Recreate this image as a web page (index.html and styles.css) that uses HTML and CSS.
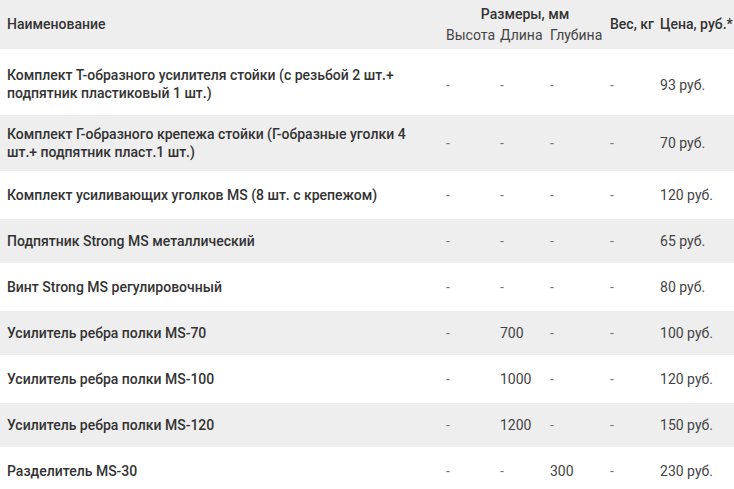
FILE: index.html
```html
<!DOCTYPE html>
<html lang="ru">
<head>
<meta charset="utf-8">
<title>Комплектующие MS</title>
<link rel="stylesheet" href="styles.css">
</head>
<body>
<div class="wrap">
<table class="price">
  <colgroup>
    <col class="c-name">
    <col class="c-h">
    <col class="c-l">
    <col class="c-d">
    <col class="c-w">
    <col class="c-p">
  </colgroup>
  <thead>
    <tr class="h1">
      <th rowspan="2" class="name">Наименование</th>
      <th colspan="3" class="group">Размеры, мм</th>
      <th rowspan="2" class="mid">Вес, кг</th>
      <th rowspan="2" class="mid">Цена, руб.*</th>
    </tr>
    <tr class="h2">
      <th class="sub">Высота</th>
      <th class="sub">Длина</th>
      <th class="sub">Глубина</th>
    </tr>
  </thead>
  <tbody>
    <tr><td class="name">Комплект Т-образного усилителя стойки (с резьбой 2 шт.+ подпятник пластиковый 1 шт.)</td><td>-</td><td>-</td><td>-</td><td>-</td><td class="pr">93 руб.</td></tr>
    <tr><td class="name">Комплект Г-образного крепежа стойки (Г-образные уголки 4 шт.+ подпятник пласт.1 шт.)</td><td>-</td><td>-</td><td>-</td><td>-</td><td class="pr">70 руб.</td></tr>
    <tr><td class="name">Комплект усиливающих уголков MS (8 шт. с крепежом)</td><td>-</td><td>-</td><td>-</td><td>-</td><td class="pr">120 руб.</td></tr>
    <tr><td class="name">Подпятник Strong MS металлический</td><td>-</td><td>-</td><td>-</td><td>-</td><td class="pr">65 руб.</td></tr>
    <tr><td class="name">Винт Strong MS регулировочный</td><td>-</td><td>-</td><td>-</td><td>-</td><td class="pr">80 руб.</td></tr>
    <tr><td class="name">Усилитель ребра полки MS-70</td><td>-</td><td class="val">700</td><td>-</td><td>-</td><td class="pr">100 руб.</td></tr>
    <tr><td class="name">Усилитель ребра полки MS-100</td><td>-</td><td class="val">1000</td><td>-</td><td>-</td><td class="pr">120 руб.</td></tr>
    <tr><td class="name">Усилитель ребра полки MS-120</td><td>-</td><td class="val">1200</td><td>-</td><td>-</td><td class="pr">150 руб.</td></tr>
    <tr><td class="name">Разделитель MS-30</td><td>-</td><td>-</td><td class="val">300</td><td>-</td><td class="pr">230 руб.</td></tr>
  </tbody>
</table>
</div>
</body>
</html>
```
FILE: styles.css
```css
html, body {
  margin: 0;
  padding: 0;
  background: #fff;
}
.wrap {
  width: 734px;
  overflow: hidden;
}
.price {
  width: 745px;
  table-layout: fixed;
  border-collapse: collapse;
  font-family: Roboto, "Liberation Sans", Arial, sans-serif;
  font-size: 14px;
  line-height: 16px;
  color: #444;
}
.c-name { width: 443px; }
.c-h { width: 54px; }
.c-l { width: 50px; }
.c-d { width: 60px; }
.c-w { width: 50px; }
.c-p { width: 88px; }

.price th, .price td {
  padding: 15px 3px 15px 3px;
  text-align: left;
  vertical-align: middle;
}
.price td.name {
  padding: 14px 14px 14px 7px;
  line-height: 18px;
  font-weight: 500;
  color: #333;
}
.price tbody tr:first-child td {
  padding-top: 18px;
  padding-bottom: 12px;
}
.price tbody tr:first-child td.name {
  padding-top: 17px;
  padding-bottom: 12px;
}
.price tbody tr:nth-child(2) td.name {
  padding-top: 11px;
  padding-bottom: 11px;
}
.price thead tr {
  background: #eeeeee;
}
.price thead th {
  font-weight: 500;
  color: #333;
}
.price thead .h1 th.name {
  padding: 4px 14px 6px 7px;
}
.price thead .h1 th.group {
  text-align: center;
  padding: 6px 3px 3px;
}
.price thead .h1 th.mid {
  padding: 4px 0 6px 3px;
}
.price thead .h2 th.sub {
  font-weight: 400;
  color: #444;
  padding: 2px 3px 6px;
}
.price tbody tr:nth-child(even) td {
  background: #eeeeee;
  box-shadow: inset 0 1px #fff, inset 0 -1px #fff;
}
.price td {
  color: #777;
}
.price td.val,
.price td.pr {
  color: #444;
}
```
